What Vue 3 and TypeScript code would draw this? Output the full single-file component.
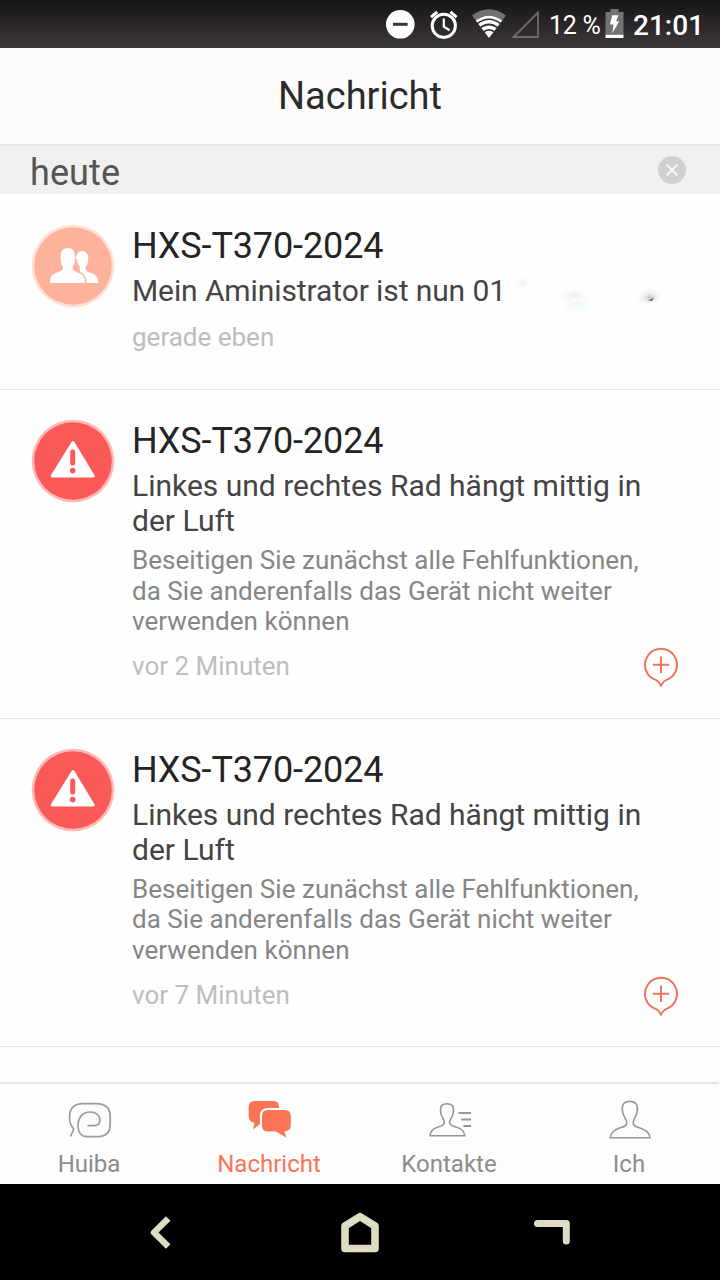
<script setup lang="ts">
interface Message {
  kind: 'admin' | 'alert'
  device: string
  text: string[]
  detail: string[]
  time: string
}

const messages: Message[] = [
  {
    kind: 'admin',
    device: 'HXS-T370-2024',
    text: ['Mein Aministrator ist nun 01'],
    detail: [],
    time: 'gerade eben',
  },
  {
    kind: 'alert',
    device: 'HXS-T370-2024',
    text: ['Linkes und rechtes Rad hängt mittig in', 'der Luft'],
    detail: ['Beseitigen Sie zunächst alle Fehlfunktionen,', 'da Sie anderenfalls das Gerät nicht weiter', 'verwenden können'],
    time: 'vor 2 Minuten',
  },
  {
    kind: 'alert',
    device: 'HXS-T370-2024',
    text: ['Linkes und rechtes Rad hängt mittig in', 'der Luft'],
    detail: ['Beseitigen Sie zunächst alle Fehlfunktionen,', 'da Sie anderenfalls das Gerät nicht weiter', 'verwenden können'],
    time: 'vor 7 Minuten',
  },
]
</script>

<template>
  <div class="screen">
    <div class="status">
      <svg class="status-icons" width="170" height="48" viewBox="376 0 170 48">
        <circle cx="400.3" cy="24.3" r="14.3" fill="#fff" />
        <rect x="393" y="22.8" width="14.6" height="3" fill="#3a3637" />
        <g fill="none" stroke="#fff">
          <circle cx="443.8" cy="25.8" r="11.6" stroke-width="3" />
          <path d="M443.8 18.4V26.6L449.6 30.2" stroke-width="2.2" />
          <path d="M431 17.2L437.2 11.8M456.6 17.2L450.4 11.8" stroke-width="3" />
        </g>
        <path d="M472 15.4Q489 3 506 15.4L502.3 20.4Q489 11 475.7 20.4Z" fill="#747172" />
        <path d="M475.7 20.4Q489 11 502.3 20.4L489 38Z" fill="#fff" />
        <g fill="none" stroke="#353132" stroke-width="1.7">
          <path d="M476.8 24Q489 14.5 501.2 24" />
          <path d="M479.4 28.5Q489 20.5 498.6 28.5" />
          <path d="M483 32.4Q489 27.4 495 32.4" />
        </g>
        <path d="M513.5 37L538 12.5V37Z" fill="none" stroke="#6e6b6c" stroke-width="1.8" />
      </svg>
      <span class="percent">12 %</span>
      <svg class="battery" width="20" height="32" viewBox="605 8 20 32">
        <path d="M605.5 12H610.5V9H618.5V12H623.5V35H605.5Z" fill="#757273" />
        <rect x="605.5" y="34.8" width="18" height="3.2" fill="#fff" />
        <path d="M612.2 15.2H618.5L616 21.3H619.2L612.4 33.2L613.6 24.6H610Z" fill="#fff" />
      </svg>
      <span class="clock">21:01</span>
    </div>

    <header class="header">Nachricht</header>

    <div class="section">
      <span>heute</span>
      <svg width="30" height="30" viewBox="0 0 30 30">
        <circle cx="15" cy="15" r="14" fill="#d0d0d0" />
        <path d="M9.7 9.5L20.3 20.5M20.3 9.5L9.7 20.5" stroke="#f7f7f7" stroke-width="2" />
      </svg>
    </div>

    <main class="list">
      <article v-for="(m, i) in messages" :key="i" class="item" :class="m.kind">
        <svg class="avatar" width="84" height="84" viewBox="0 0 84 84">
          <template v-if="m.kind === 'admin'">
            <circle cx="42" cy="42" r="41.3" fill="#ffe0d5" />
            <circle cx="42" cy="42" r="38.8" fill="#feb29b" />
            <path d="M46.5 42.5C44.8 40.5 44.9 37.5 44.9 35C44.9 29.5 47.5 27 51.2 27C55 27 57.3 29.6 57.3 34C57.3 38.5 56 41 54.5 43.5C54.5 47.5 56.5 47.9 60.5 49.2C65.2 50.7 67 53 67.2 59H55Z" fill="#fff" />
            <path d="M19 59C19 51 22 49.8 27 48.2C31 46.9 32.4 45.6 32 43.1C30 40.3 29.6 37.3 29.6 33.2C29.6 27.3 32 24 37 24C42 24 44 27.5 44 33.3C44 37.5 43.4 40.5 41.6 43.1C41.3 45.9 43 47 47 48.5C51.4 50.1 53.8 51.4 54.2 59Z" fill="#fff" />
            <path d="M45.2 35C45.2 39 46 41 48.2 43.6C48.6 45.6 47.6 46.8 46.6 47.6C52 49.4 54.6 52 54.8 59" fill="none" stroke="#feb29b" stroke-width="1.5" />
          </template>
          <template v-else>
            <circle cx="42" cy="42" r="41.3" fill="#ffb8b5" />
            <circle cx="42" cy="42" r="38.8" fill="#f95a58" />
            <path d="M42 23.5L62.2 57H21.2Z" fill="#fff" stroke="#fff" stroke-width="3" stroke-linejoin="round" />
            <path d="M41.7 33V44" stroke="#f95a58" stroke-width="5" stroke-linecap="round" />
            <circle cx="41.7" cy="51.6" r="2.8" fill="#f95a58" />
          </template>
        </svg>
        <div class="body">
          <h2 class="device">{{ m.device }}</h2>
          <p class="text">
            <span v-for="line in m.text" :key="line" class="line">{{ line }}</span>
            <svg v-if="m.kind === 'admin'" class="smudge" width="160" height="44" viewBox="506 270 160 44">
              <defs>
                <radialGradient id="soft-grey">
                  <stop offset="0" stop-color="#ddd" />
                  <stop offset="1" stop-color="#fff" stop-opacity="0" />
                </radialGradient>
                <radialGradient id="soft-dark" cx=".55" cy=".75">
                  <stop offset="0" stop-color="#888" />
                  <stop offset=".35" stop-color="#ccc" stop-opacity=".7" />
                  <stop offset="1" stop-color="#fff" stop-opacity="0" />
                </radialGradient>
                <radialGradient id="soft-blue">
                  <stop offset="0" stop-color="#e9f6fd" />
                  <stop offset="1" stop-color="#f8fcff" stop-opacity="0" />
                </radialGradient>
              </defs>
              <ellipse cx="523" cy="283" rx="10" ry="9" fill="url(#soft-grey)" opacity=".5" />
              <ellipse cx="574" cy="296" rx="20" ry="10" fill="url(#soft-grey)" opacity=".6" />
              <path d="M566 303Q574 297 586 297V312H566Z" fill="#fbfdfe" />
              <ellipse cx="577" cy="304" rx="17" ry="9" fill="url(#soft-blue)" />
              <ellipse cx="648" cy="292" rx="16" ry="11" fill="url(#soft-dark)" opacity=".5" />
              <path d="M648 300.5L654 297.5L652 301Z" fill="#666" />
            </svg>
          </p>
          <p v-if="m.detail.length" class="detail">
            <span v-for="line in m.detail" :key="line" class="line">{{ line }}</span>
          </p>
          <div class="foot">
            <time>{{ m.time }}</time>
            <svg v-if="m.kind === 'alert'" class="pin" width="36" height="42" viewBox="0 0 36 42">
              <path d="M13.2 34.1A16 16 0 1 1 22.8 34.1Q20 35.5 18 39.5Q16 35.5 13.2 34.1Z" fill="none" stroke="#f0745c" stroke-width="2" />
              <path d="M18 10.5V27M9.8 18.7H26.2" stroke="#f0745c" stroke-width="2" />
            </svg>
          </div>
        </div>
      </article>
    </main>

    <nav class="tabs">
      <div class="tab">
        <svg width="48" height="42" viewBox="65 1098 48 42" fill="none" stroke="#9c9c9c" stroke-width="1.7">
          <path d="M70.5 1136.5L73.8 1129Q69.5 1124.5 69.5 1117.5C69.5 1108 74 1103.7 83 1103.7H96C105.5 1103.7 110.2 1108.5 110.2 1117V1124C110.2 1132 106 1136.6 98 1136.6H87C81 1136.6 78 1132 78 1126C78 1117 83 1112 90 1112C96.5 1112 100 1115.5 100 1119.8C100 1123.6 97.7 1125.6 94 1125.6H87.5" />
        </svg>
        <span>Huiba</span>
      </div>
      <div class="tab active">
        <svg width="48" height="42" viewBox="245 1098 48 42" fill="#fb7454">
          <path d="M255 1101H273Q279 1101 279 1107V1108H268Q260 1108 260 1116V1124L253 1129.5L254.5 1123Q248.7 1121.5 248.7 1116V1107Q248.7 1101 255 1101Z" />
          <path d="M268 1110H285Q290.8 1110 290.8 1116V1125Q290.8 1131 284.5 1131.4L286.5 1137.7L276 1131.5H268Q262 1131.5 262 1125.5V1116Q262 1110 268 1110Z" />
        </svg>
        <span>Nachricht</span>
      </div>
      <div class="tab">
        <svg width="48" height="42" viewBox="425 1098 48 42" fill="none" stroke="#979797" stroke-width="1.6">
          <path d="M430 1135.7C430.4 1130.5 433 1128.5 438 1127Q444.6 1125.5 444.4 1122C444.3 1119.2 440.8 1116.3 440.8 1112.7C439.8 1106.5 441.5 1103.7 447 1103.7C452.5 1103.7 454.2 1106.5 453.2 1112.7C453.2 1116.3 449.8 1119.2 449.6 1122Q449.4 1125.5 456 1127C461.5 1128.5 464 1130.5 464.8 1135.7Z" />
          <path d="M458.5 1113H471M461.2 1119.5H471M463.3 1126H471" stroke-width="2.2" />
        </svg>
        <span>Kontakte</span>
      </div>
      <div class="tab">
        <svg width="48" height="42" viewBox="605 1098 48 42" fill="none" stroke="#979797" stroke-width="1.6">
          <path d="M610.2 1137.8C611 1132 614.5 1130 619.5 1128Q627 1126.5 626.8 1122.5C626.6 1119 622.8 1115.5 622.5 1111.5C621.5 1104.5 624 1101.4 629.8 1101.4C635.8 1101.4 638 1104.5 637.2 1111.5C636.8 1115.5 633.4 1119 633.2 1122.5Q633 1126.5 640 1128C645.5 1130 649 1132 650 1137.8Z" />
        </svg>
        <span>Ich</span>
      </div>
    </nav>

    <div class="system">
      <svg width="720" height="96" viewBox="0 1184 720 96" fill="none" stroke="#deddc4" stroke-width="7" stroke-linejoin="round" stroke-linecap="round">
        <path d="M168.2 1218.5L154 1232.5L168.2 1246.5" stroke-width="6.4" stroke-linecap="butt" />
        <path d="M345 1226L360 1216.6L375 1226V1248.5H345Z" stroke-width="7.6" />
        <path d="M537.5 1223.6H566.3V1241" stroke-linejoin="round" />
      </svg>
    </div>
  </div>
</template>

<style>
html,
body {
  margin: 0;
  background: #fff;
}
</style>

<style scoped>
.screen {
  width: 720px;
  height: 1280px;
  display: flex;
  flex-direction: column;
  overflow: hidden;
  background: #fefefe;
  font-family: Roboto, "Noto Sans", sans-serif;
}
.screen > * {
  flex: none;
}
svg {
  display: block;
}
.status {
  height: 48px;
  box-sizing: border-box;
  padding-left: 376px;
  display: flex;
  align-items: center;
  background: linear-gradient(#171415, #3d393a);
  color: #fff;
}
.status-icons {
  flex: none;
}
.percent {
  width: 59px;
  margin-left: 3px;
  padding-top: 2px;
  font-size: 25px;
  letter-spacing: -0.3px;
  white-space: nowrap;
}
.battery {
  flex: none;
  margin-left: -3px;
}
.clock {
  margin-left: 8px;
  padding-top: 2px;
  font-size: 28px;
  font-weight: 500;
}
.header {
  height: 96px;
  line-height: 96px;
  text-align: center;
  font-size: 38px;
  color: #2b2b2b;
  background: #fcfcfc;
}
.section {
  height: 50px;
  box-sizing: border-box;
  border-top: 2px solid #e4e4e4;
  padding: 4px 33px 0 30px;
  display: flex;
  align-items: center;
  justify-content: space-between;
  background: #f0f0f0;
  color: #555;
  font-size: 36px;
  line-height: 42px;
  letter-spacing: 0.1px;
}
.section span {
  margin-top: 1px;
}
.section svg {
  margin-top: -4px;
}
.list {
  height: 888px;
}
.item {
  box-sizing: border-box;
  height: 328.5px;
  padding: 30px 40px 0 31px;
  display: flex;
  border-bottom: 1px solid #e2e2e2;
}
.item.admin {
  height: 196px;
}
.avatar {
  flex: none;
  margin-right: 17px;
}
.alert .avatar {
  margin-top: -1px;
}
.body {
  flex: 1;
}
.admin .body {
  padding-top: 1px;
}
.device {
  margin: 0;
  font-size: 36px;
  line-height: 42px;
  font-weight: 400;
  letter-spacing: -0.12px;
  color: #242424;
}
.text {
  position: relative;
  margin: 6px 0 0;
  font-size: 30px;
  line-height: 35px;
  color: #444;
}
.admin .text {
  letter-spacing: -0.1px;
}
.line {
  display: block;
  white-space: nowrap;
}
.smudge {
  position: absolute;
  left: 374px;
  top: -3px;
}
.detail {
  margin: 7px 0 0;
  font-size: 26px;
  line-height: 30.7px;
  letter-spacing: 0.03px;
  color: #868686;
}
.foot {
  margin-top: 14px;
  display: flex;
  justify-content: space-between;
  font-size: 26px;
  line-height: 30px;
  color: #bdbdbd;
}
.pin {
  margin: -5px 1px -7px 0;
}
.tabs {
  height: 102px;
  box-sizing: border-box;
  border-top: 2px solid #e4e4e4;
  display: flex;
  margin: 0 1px 0 -1px;
  background: #fdfdfd;
}
.tab {
  flex: 1;
  padding-top: 14px;
  display: flex;
  flex-direction: column;
  align-items: center;
  font-size: 24px;
  line-height: 28px;
  color: #8c8c8c;
}
.tab span {
  margin-top: 10px;
}
.tab.active {
  color: #fb7454;
}
.system {
  height: 96px;
  background: #000;
}
</style>
